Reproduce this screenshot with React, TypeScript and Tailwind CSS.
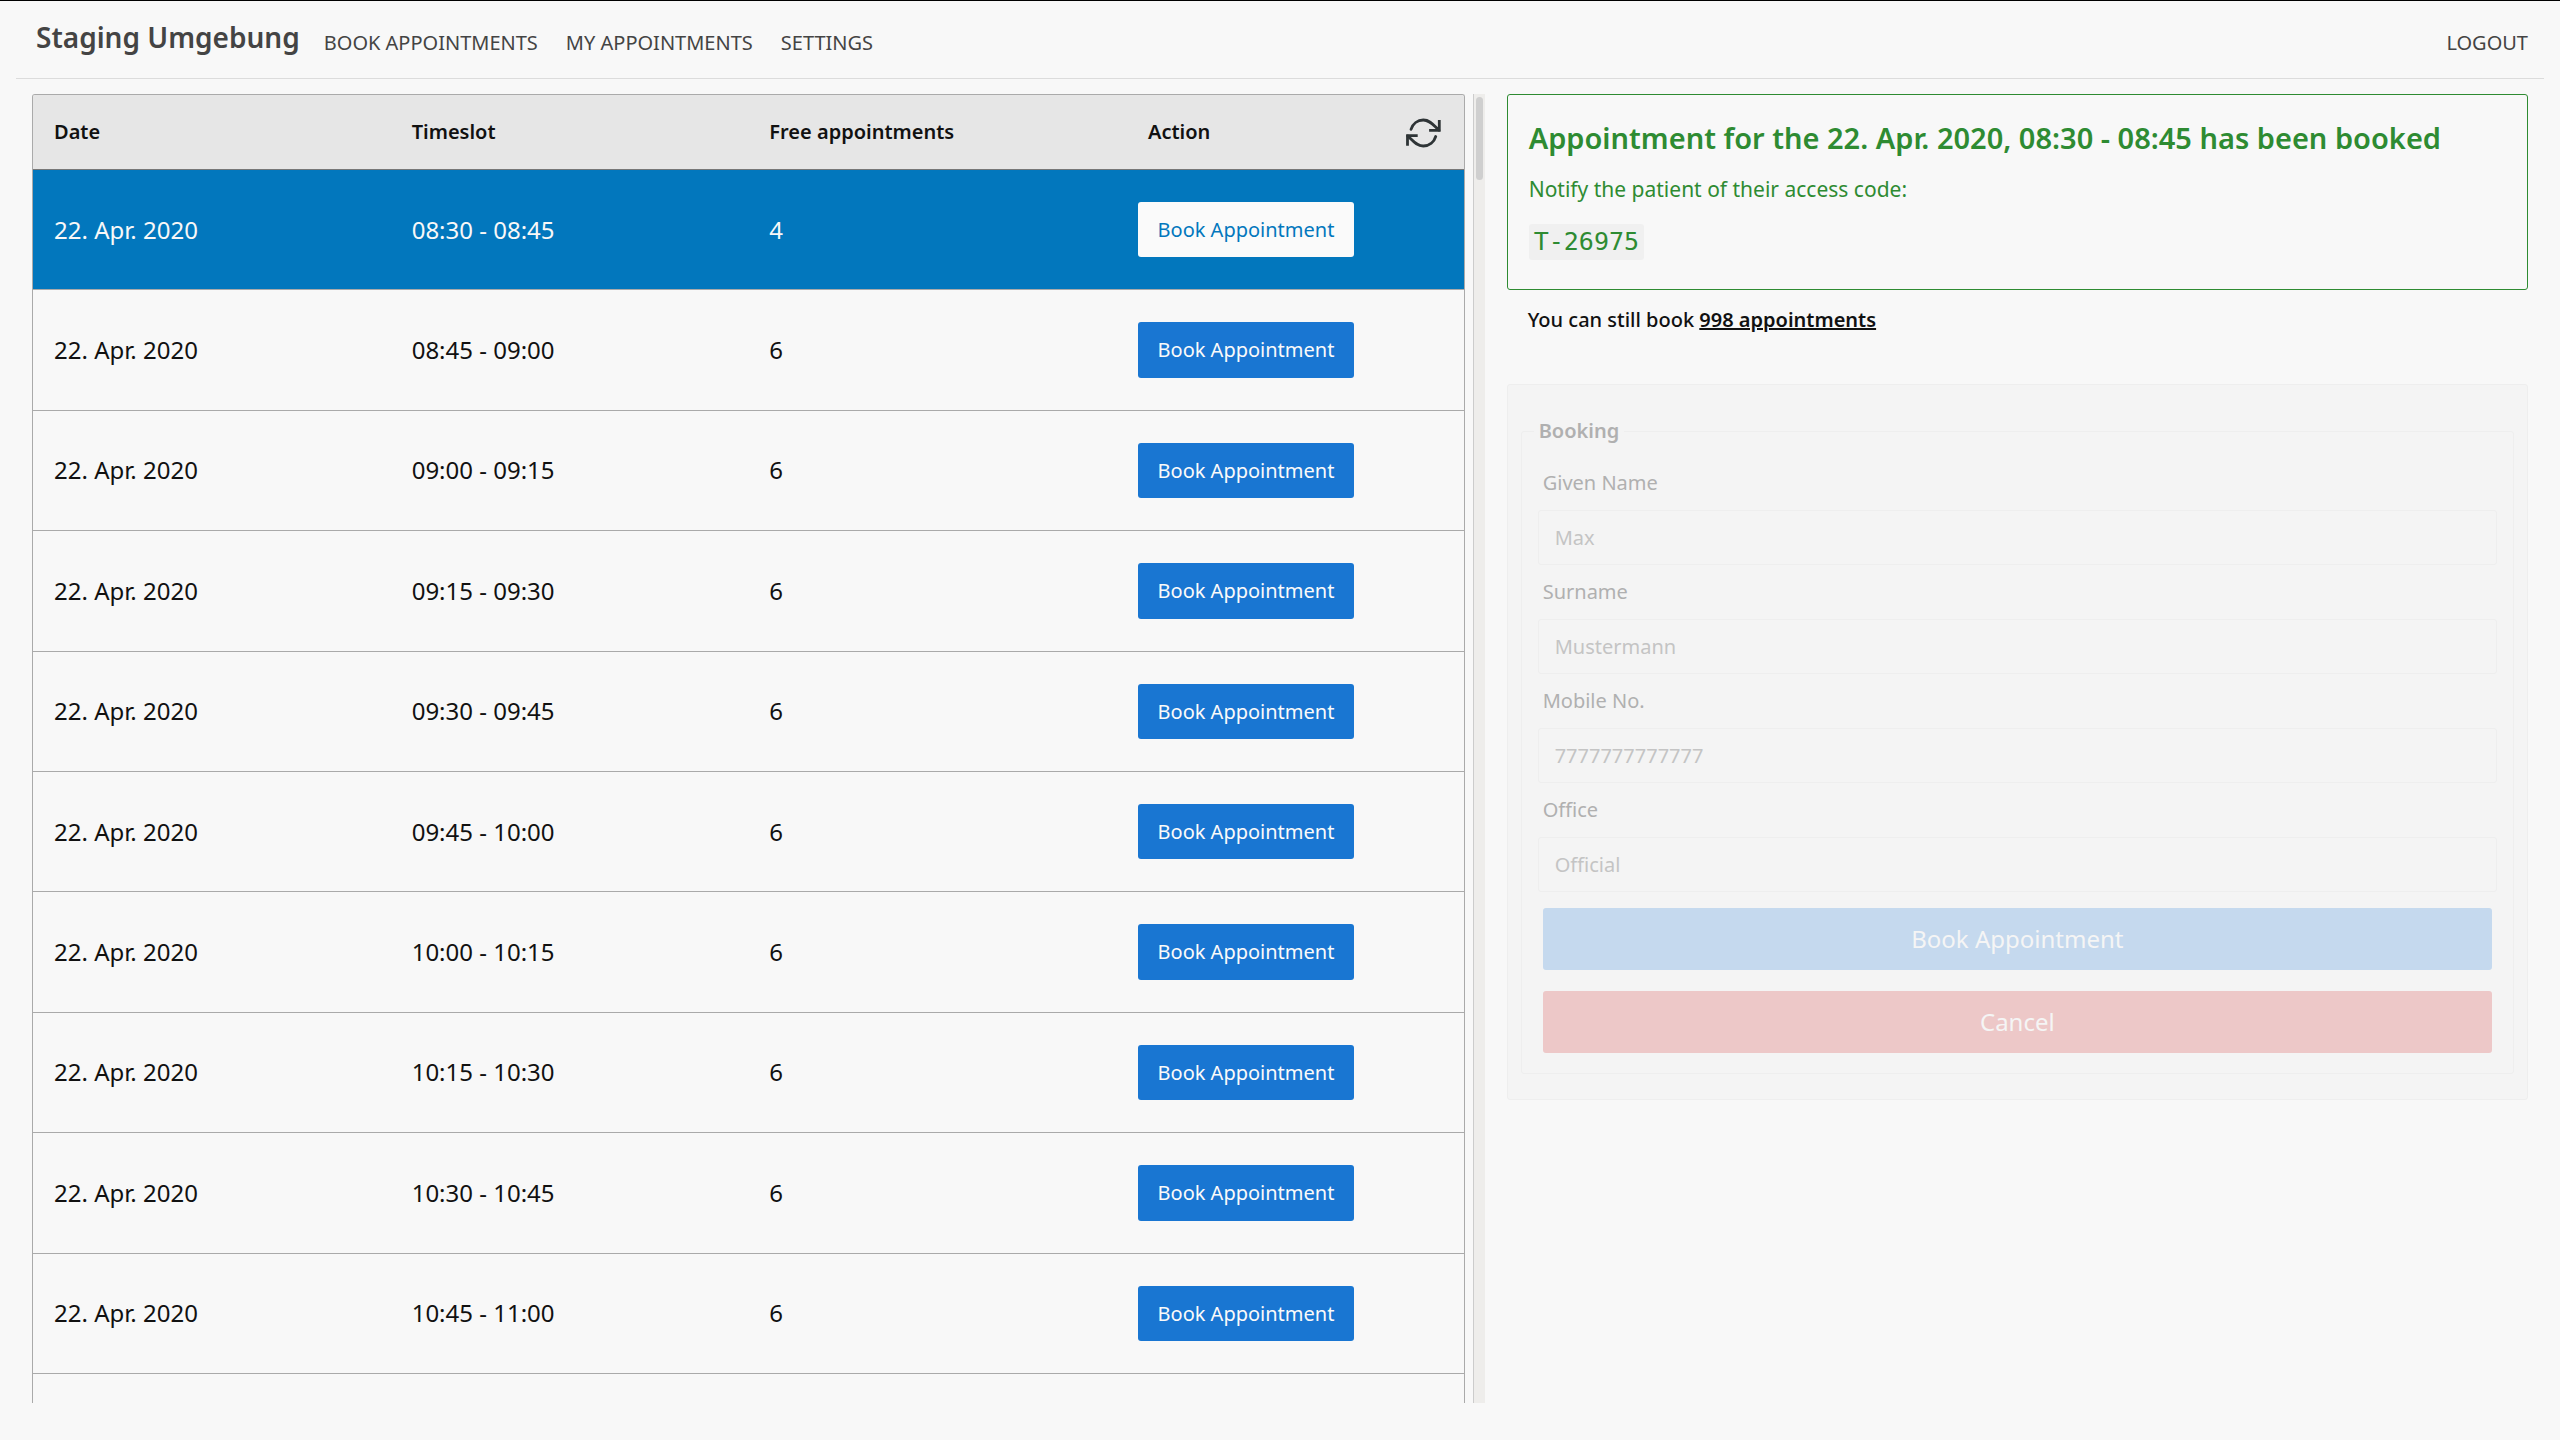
import React from "react";

const slots = [
  { date: "22. Apr. 2020", time: "08:30 - 08:45", free: 4, selected: true },
  { date: "22. Apr. 2020", time: "08:45 - 09:00", free: 6 },
  { date: "22. Apr. 2020", time: "09:00 - 09:15", free: 6 },
  { date: "22. Apr. 2020", time: "09:15 - 09:30", free: 6 },
  { date: "22. Apr. 2020", time: "09:30 - 09:45", free: 6 },
  { date: "22. Apr. 2020", time: "09:45 - 10:00", free: 6 },
  { date: "22. Apr. 2020", time: "10:00 - 10:15", free: 6 },
  { date: "22. Apr. 2020", time: "10:15 - 10:30", free: 6 },
  { date: "22. Apr. 2020", time: "10:30 - 10:45", free: 6 },
  { date: "22. Apr. 2020", time: "10:45 - 11:00", free: 6 },
];

const fields = [
  { id: "given-name", label: "Given Name", placeholder: "Max" },
  { id: "surname", label: "Surname", placeholder: "Mustermann" },
  { id: "mobile", label: "Mobile No.", placeholder: "7777777777777" },
  { id: "office", label: "Office", placeholder: "Official" },
];

function RefreshIcon() {
  return (
    <svg
      width="35"
      height="30"
      viewBox="0 0 35 30"
      fill="none"
      stroke="#2e3436"
      strokeWidth="2.8"
      strokeLinecap="round"
      strokeLinejoin="miter"
      aria-hidden="true"
    >
      <path d="M5 11.3C6.8 5.6 11.6 2 17.3 2C24.5 2 28 7.8 33 12.2" />
      <path d="M33.3 3.5V12.3H24.5" strokeLinecap="square" />
      <path d="M29.7 18.5C28 24.3 23.2 28 17.3 28C10.5 28 6.5 22.2 1.7 17.9" />
      <path d="M1.5 26.3V17.6H10.3" strokeLinecap="square" />
    </svg>
  );
}

function Header() {
  return (
    <header className="mx-4 flex h-[78px] items-center border-b border-[#dcdcdc] px-4 text-xl text-[#444]">
      <h1 className="mr-5 px-1 pb-1.5 text-[28px] leading-9 font-semibold">Staging Umgebung</h1>
      <nav className="flex flex-1 items-center gap-7 pt-1.5">
        <a href="#book">BOOK APPOINTMENTS</a>
        <a href="#mine">MY APPOINTMENTS</a>
        <a href="#settings">SETTINGS</a>
        <a href="#logout" className="ml-auto">LOGOUT</a>
      </nav>
    </header>
  );
}

function SlotTable() {
  return (
    <div className="mr-2 min-w-0 flex-1 overflow-hidden rounded-t-[3px] border-x border-t border-[#aaa]">
      <table className="w-full table-fixed border-separate border-spacing-0 text-left">
        <thead className="bg-[#e6e6e6] text-xl">
          <tr className="h-[75px]">
            <th className="border-b border-[#777] px-[21px] font-semibold">Date</th>
            <th className="border-b border-[#777] px-[21px] font-semibold">Timeslot</th>
            <th className="border-b border-[#777] px-[21px] font-semibold">Free appointments</th>
            <th className="border-b border-[#777] pr-[23px] pl-[42px] font-semibold">
              <div className="flex items-center justify-between">
                Action
                <button type="button" aria-label="Refresh" className="pt-0.5">
                  <RefreshIcon />
                </button>
              </div>
            </th>
          </tr>
        </thead>
        <tbody className="text-2xl">
          {slots.map((s) => (
            <tr key={s.time} className={s.selected ? "bg-[#0277bd] text-[#f8f8f8]" : "text-[#111]"}>
              <td className="border-b border-[#aaa] px-[21px]">{s.date}</td>
              <td className="border-b border-[#aaa] px-[21px]">{s.time}</td>
              <td className="border-b border-[#aaa] px-[21px]">{s.free}</td>
              <td className="border-b border-[#aaa] px-8 py-8">
                <button
                  type="button"
                  className={
                    s.selected
                      ? "block w-[216px] rounded-[3px] bg-[#fafafa] py-[13px] text-xl leading-[1.47] text-[#0277bd]"
                      : "block w-[216px] rounded-[3px] bg-[#1976d2] py-[13px] text-xl leading-[1.47] text-[#fafafa]"
                  }
                >
                  Book Appointment
                </button>
              </td>
            </tr>
          ))}
        </tbody>
      </table>
    </div>
  );
}

function BookingForm() {
  return (
    <form className="mt-[49px] rounded-[3px] border border-[#eee] bg-[#f4f4f4] px-[13px] pt-8 pb-[25px]">
      <fieldset disabled className="rounded-[3px] border border-[#eee] px-3 pb-5 text-xl">
        <legend className="px-[5px] leading-7 font-semibold text-[#b0b0b0]">Booking</legend>
        <div className="px-1 pt-[11px]">
          {fields.map((f) => (
            <div key={f.id}>
              <label htmlFor={f.id} className="block px-[5px] pt-3 pb-[13px] leading-[29px] text-[#b0b0b0]">
                {f.label}
              </label>
              <input
                id={f.id}
                type="text"
                placeholder={f.placeholder}
                className="block h-[55px] w-full rounded-[3px] border border-[#eee] px-4 placeholder:text-[#c4c4c4]"
              />
            </div>
          ))}
          <div className="mt-4 flex flex-col gap-[21px] px-[5px] text-2xl text-[#f5f5f5]">
            <button type="submit" className="h-[62px] rounded-[3px] bg-[#c5d9ee]">Book Appointment</button>
            <button type="button" className="h-[62px] rounded-[3px] bg-[#edc8c8]">Cancel</button>
          </div>
        </div>
      </fieldset>
    </form>
  );
}

export default function App() {
  return (
    <div className="flex h-screen flex-col border-t border-black bg-[#f8f8f8] font-['Noto_Sans',sans-serif] text-[#111]">
      <Header />
      <main className="flex min-h-0 flex-1 gap-[22px] px-8 pt-[15px] pb-[37px]">
        <section className="flex w-[58.2%] flex-none" aria-label="Timeslots">
          <SlotTable />
          <div className="w-3 border-l border-[#ccc] bg-[#eeedeb] px-0.5 py-[3px]">
            <div className="h-[83px] rounded-full bg-[#cfcfcf]" />
          </div>
        </section>
        <section className="min-w-0 flex-1" aria-label="Booking">
          <div className="rounded-[3px] border border-[#2e8b32] px-[21px] pt-5 pb-[29px] text-[#2e8b32]">
            <h2 className="text-[29px] leading-[46px] font-semibold">
              Appointment for the 22. Apr. 2020, 08:30 - 08:45 has been booked
            </h2>
            <p className="mt-3 text-[21px] leading-8">Notify the patient of their access code:</p>
            <code className="mt-[19px] block w-fit rounded-[3px] bg-[#f0f0f0] px-[5px] font-['DejaVu_Sans_Mono',monospace] text-[25px] leading-9">
              T-26975
            </code>
          </div>
          <p className="mt-[15px] px-[21px] text-xl leading-[30px] font-medium">
            You can still book <a href="#mine" className="font-semibold underline">998 appointments</a>
          </p>
          <BookingForm />
        </section>
      </main>
    </div>
  );
}
